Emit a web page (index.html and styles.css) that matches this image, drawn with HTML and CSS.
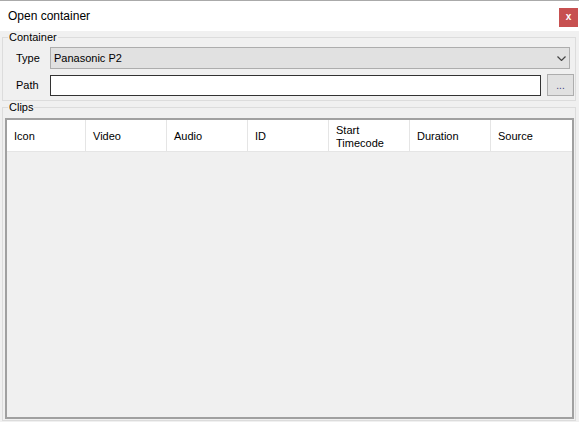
FILE: index.html
```html
<!DOCTYPE html>
<html>
<head>
<meta charset="utf-8">
<link rel="stylesheet" href="styles.css">
</head>
<body>
<div class="window">
  <div class="titlebar">
    <span class="title">Open container</span>
    <span class="close">x</span>
  </div>
  <fieldset class="group group-container">
    <legend>Container</legend>
    <div class="row">
      <span class="lbl">Type</span>
      <div class="combo">
        <span class="combo-text">Panasonic P2</span>
        <svg class="chev" width="9" height="5" viewBox="0 0 9 5"><path d="M0.5 0.5 L4.5 4.5 L8.5 0.5" fill="none" stroke="#444" stroke-width="1.2"/></svg>
      </div>
    </div>
    <div class="row row2">
      <span class="lbl">Path</span>
      <div class="textbox"></div>
      <div class="btn">...</div>
    </div>
  </fieldset>
  <fieldset class="group group-clips">
    <legend>Clips</legend>
    <div class="listview">
      <div class="header">
        <div class="col first">Icon</div>
        <div class="col">Video</div>
        <div class="col">Audio</div>
        <div class="col">ID</div>
        <div class="col">Start<br>Timecode</div>
        <div class="col">Duration</div>
        <div class="col last">Source</div>
      </div>
    </div>
  </fieldset>
</div>
</body>
</html>
```
FILE: styles.css
```css
* { box-sizing: border-box; }
html, body { margin: 0; padding: 0; }
body {
  width: 579px;
  height: 422px;
  overflow: hidden;
  background: #f0f0f0;
  font-family: "Liberation Sans", Arial, sans-serif;
  font-size: 11px;
  line-height: 13px;
  color: #000;
}
.window {
  width: 579px;
  height: 422px;
  background: #f0f0f0;
}
.titlebar {
  height: 31px;
  background: #fff;
  border-top: 1px solid #aaaaaa;
  display: flex;
  align-items: flex-start;
  justify-content: space-between;
}
.title {
  font-size: 12px;
  line-height: 14px;
  margin: 8px 0 0 8px;
}
.close {
  width: 19px;
  height: 19px;
  margin: 7px 1px 0 0;
  background: #c75050;
  color: #fff;
  font-weight: bold;
  font-size: 10px;
  line-height: 18px;
  text-align: center;
}
.group {
  margin: 0 3px 0 2px;
  border: 1px solid #dcdcdc;
  min-width: 0;
}
.group legend {
  padding: 0 1px;
  margin-left: 5px;
  line-height: 13px;
}
.group-container {
  padding: 3px 0 4px 0;
}
.group-clips {
  padding: 4px 0 1px 0;
}
.row {
  display: flex;
  align-items: flex-start;
  height: 22px;
}
.row2 {
  margin-top: 5px;
}
.lbl {
  width: 47px;
  flex: none;
  padding-left: 13px;
  line-height: 22px;
}
.combo {
  flex: 1;
  height: 22px;
  margin-right: 5px;
  background: #e1e1e1;
  border: 1px solid #adadad;
  display: flex;
  align-items: center;
  justify-content: space-between;
  padding: 0 3px 0 3px;
}
.chev { display: block; margin-top: 1px; }
.textbox {
  flex: 1;
  height: 21px;
  margin-top: 1px;
  margin-right: 6px;
  background: #fff;
  border: 1px solid #333;
}
.btn {
  width: 27px;
  height: 22px;
  flex: none;
  margin-right: 1px;
  background: #e1e1e1;
  border: 1px solid #adadad;
  text-align: center;
  line-height: 22px;
  font-size: 10px;
  color: #404080;
}
.listview {
  height: 301px;
  margin: 0 1px 0 2px;
  border: 2px solid #a0a0a0;
  background: #f0f0f0;
}
.header {
  display: flex;
  height: 32px;
  background: #fff;
  border-bottom: 1px solid #e5e5e5;
}
.col {
  width: 81px;
  flex: none;
  border-right: 1px solid #e5e5e5;
  padding: 2px 0 0 7px;
  display: flex;
  align-items: center;
  line-height: 13px;
}
.col.first { width: 79px; }
.col.last { flex: 1; border-right: none; }
```
